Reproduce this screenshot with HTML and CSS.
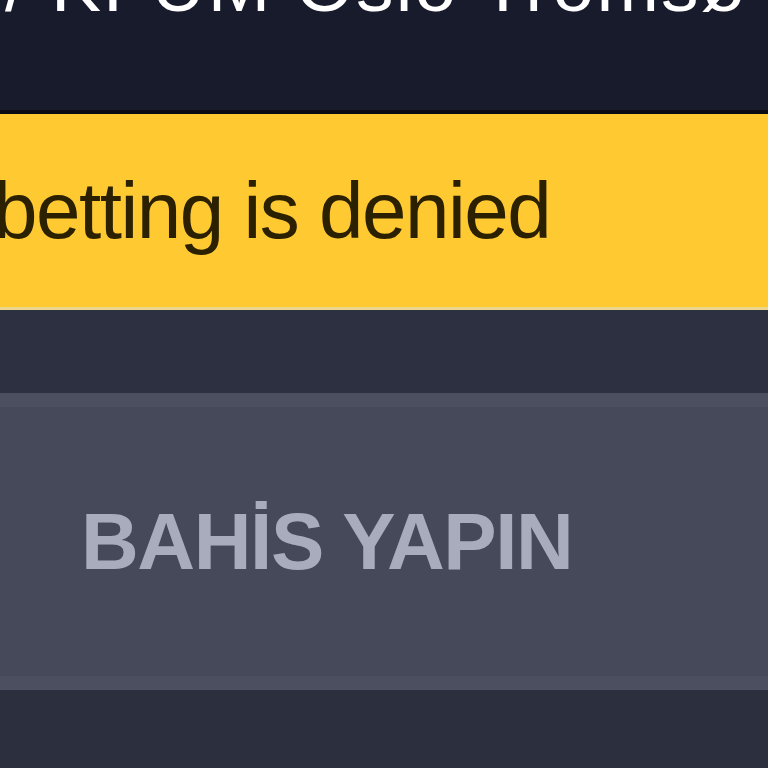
FILE: index.html
```html
<!DOCTYPE html>
<html>
<head>
<meta charset="utf-8">
<link rel="stylesheet" href="styles.css">
</head>
<body>
<div class="header"><div class="title">/ KFUM Oslo Tromsø</div></div>
<div class="notice"><span class="notice-text">betting is denied</span></div>
<div class="spacer"></div>
<div class="bet"><span class="bet-text">BAHİS YAPIN</span></div>
</body>
</html>
```
FILE: styles.css
```css
html, body {
  margin: 0;
  padding: 0;
}
body {
  background: #2b2f3e;
  font-family: "Liberation Sans", Arial, sans-serif;
  width: 768px;
  height: 768px;
  overflow: hidden;
}
.header {
  background: #181b2b;
  height: 110px;
  border-bottom: 4px solid #0b0c13;
  overflow: hidden;
}
.title {
  color: #ffffff;
  font-size: 75px;
  line-height: 75px;
  margin-top: -52px;
  margin-left: 5px;
  white-space: nowrap;
  letter-spacing: 2.2px;
}
.notice {
  background: #ffc932;
  height: 193px;
  border-bottom: 3px solid #ecd68f;
  display: flex;
  align-items: center;
  overflow: hidden;
}
.notice-text {
  color: #2b2100;
  font-size: 80px;
  line-height: 80px;
  letter-spacing: -1.5px;
  margin-left: -7px;
  white-space: nowrap;
}
.spacer {
  height: 83px;
  background: #2c3041;
}
.bet {
  background: #454959;
  border-top: 14px solid #4b4f60;
  border-bottom: 14px solid #4b4f60;
  height: 269px;
  display: flex;
  align-items: center;
  padding-left: 81px;
}
.bet-text {
  color: #a9acbd;
  font-size: 80px;
  line-height: 80px;
  font-weight: bold;
  letter-spacing: -1.4px;
  white-space: nowrap;
}
```
